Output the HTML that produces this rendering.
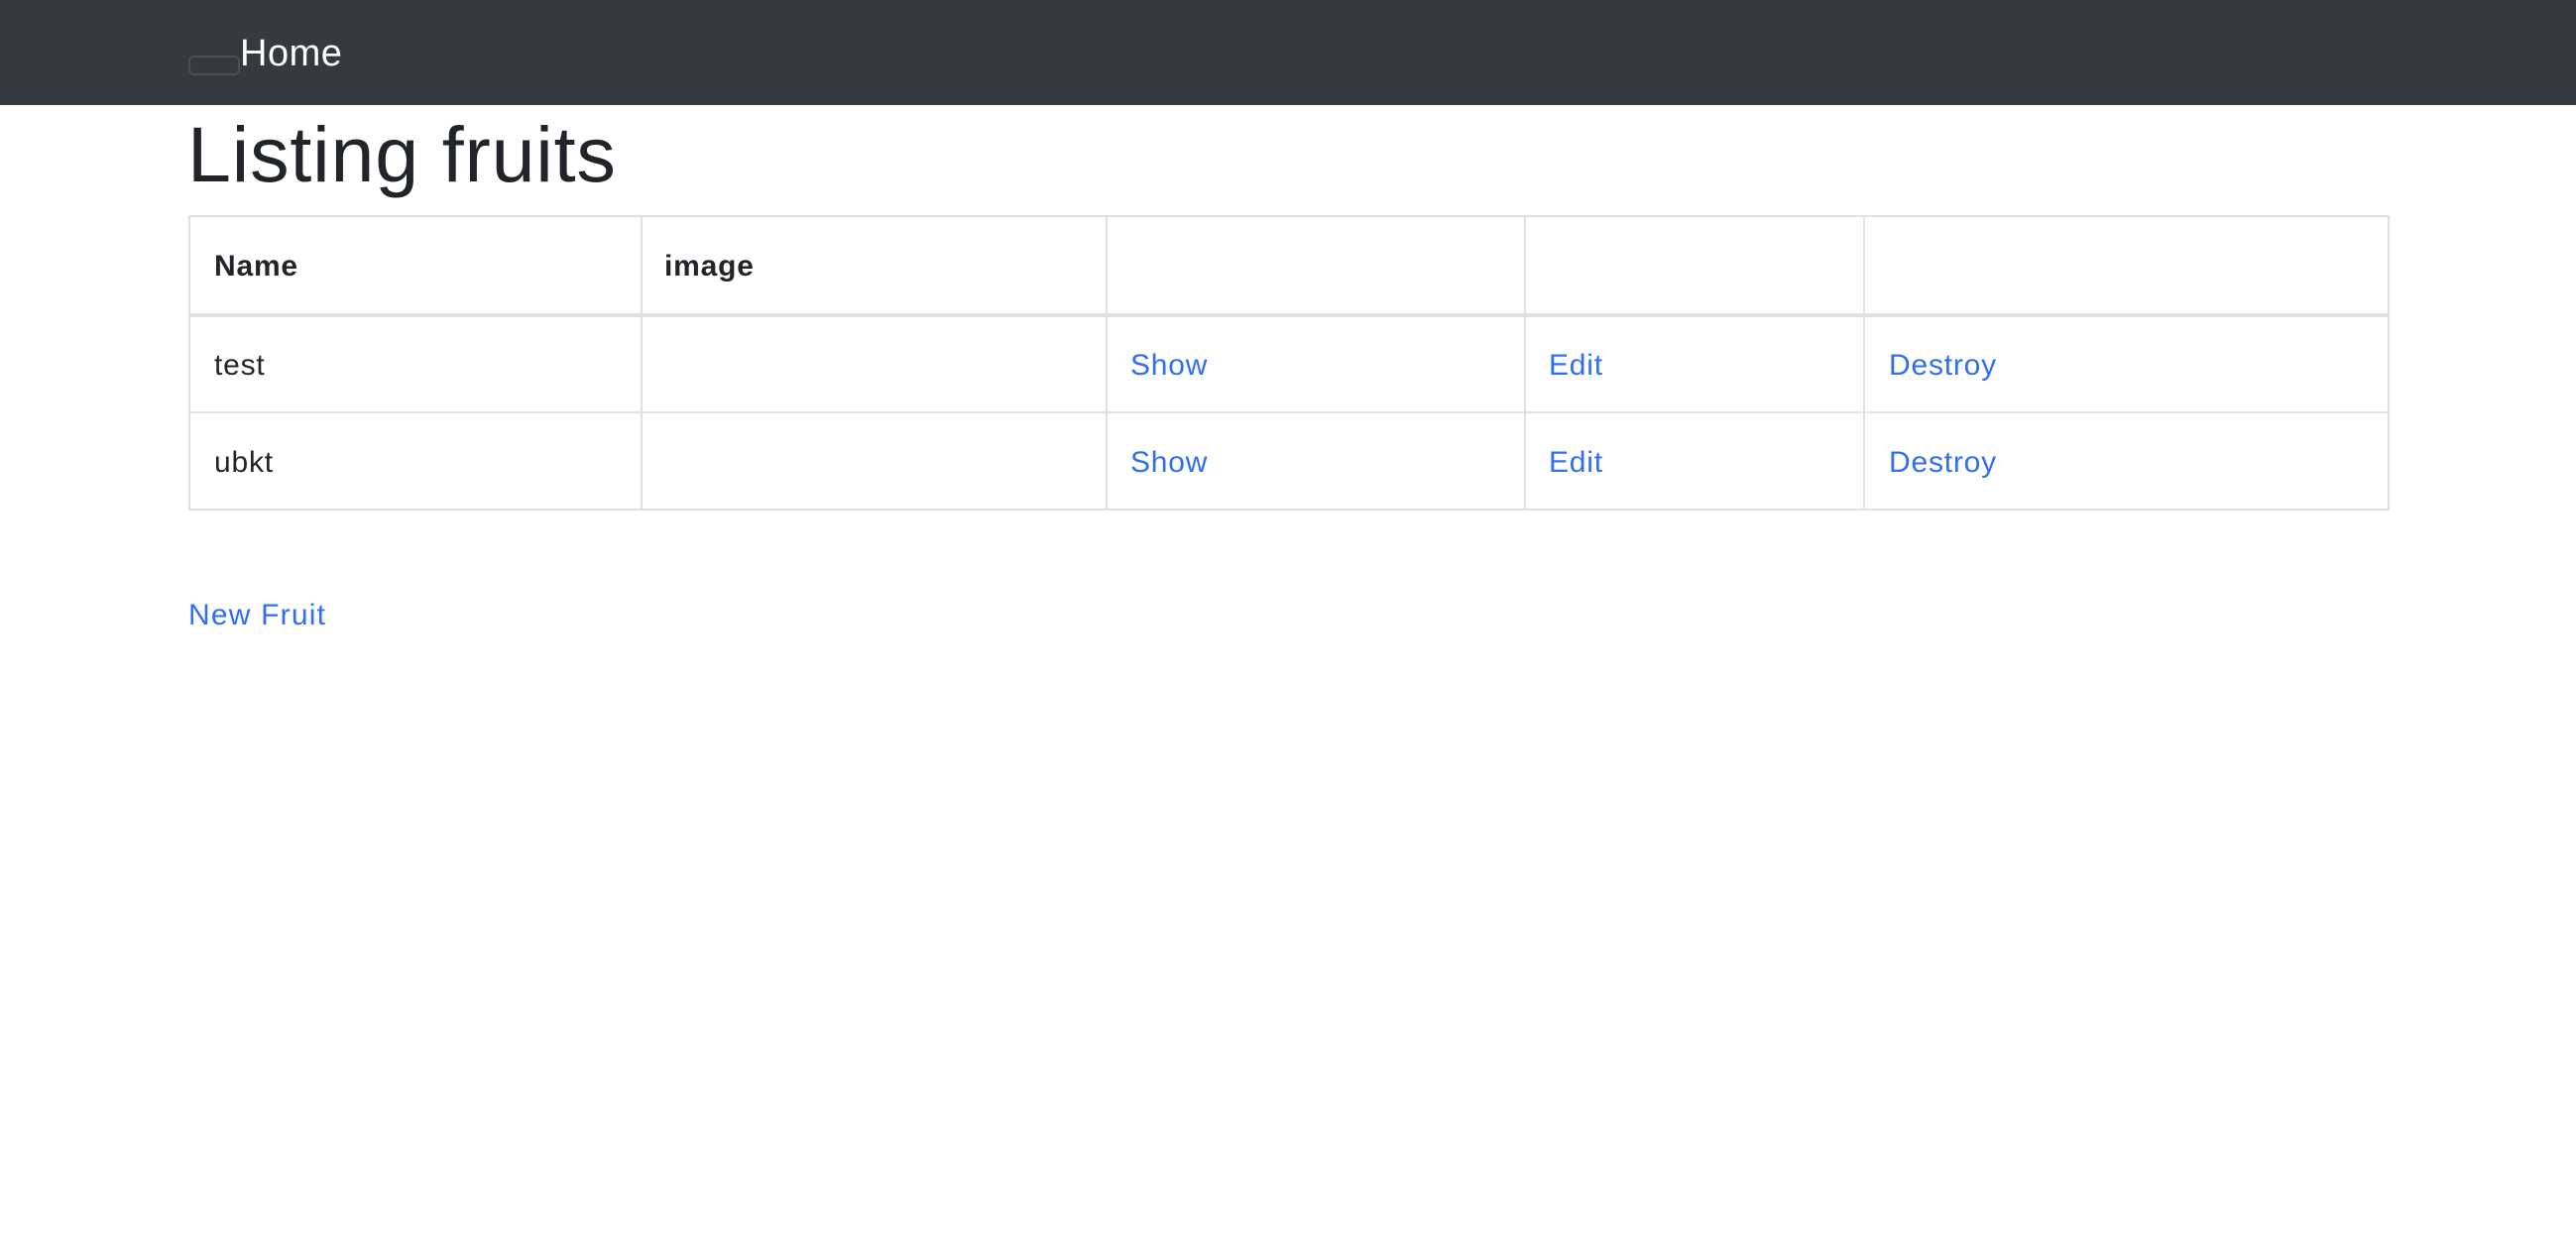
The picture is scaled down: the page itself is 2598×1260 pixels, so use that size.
<!DOCTYPE html>
<html><head><meta charset="utf-8"><style>
body{margin:0;width:2598px;height:1260px;background:#fff;font-family:"Liberation Sans",sans-serif;color:#212529;position:relative;overflow:hidden}
.nav{position:absolute;left:0;top:0;width:2598px;height:106px;background:#343a40}
.t{position:absolute;white-space:nowrap;line-height:1;letter-spacing:0.8px}
.h{position:absolute;background:#dee2e6}
a{color:#2f6ff0;text-decoration:none}
</style></head><body>
<div class="nav"></div>
<div style="position:absolute;left:190px;top:56px;width:48px;height:16px;border:2px solid #4a5056;border-radius:6px"></div>
<div class="t" style="left:242px;top:35px;font-size:38px;color:#fff;letter-spacing:0.5px">Home</div>
<div class="t" style="left:189px;top:116px;font-size:79px;letter-spacing:0.8px">Listing fruits</div>

<div class="h" style="left:190px;top:217px;width:2220px;height:2px"></div>
<div class="h" style="left:190px;top:316px;width:2220px;height:4px"></div>
<div class="h" style="left:190px;top:415px;width:2220px;height:2px"></div>
<div class="h" style="left:190px;top:513px;width:2220px;height:2px"></div>
<div class="h" style="left:190px;top:217px;width:2px;height:298px"></div>
<div class="h" style="left:646px;top:217px;width:2px;height:298px"></div>
<div class="h" style="left:1115px;top:217px;width:2px;height:298px"></div>
<div class="h" style="left:1537px;top:217px;width:2px;height:298px"></div>
<div class="h" style="left:1879px;top:217px;width:2px;height:298px"></div>
<div class="h" style="left:2408px;top:217px;width:2px;height:298px"></div>

<div class="t" style="left:216px;top:254px;font-size:30px;font-weight:bold">Name</div>
<div class="t" style="left:670px;top:254px;font-size:30px;font-weight:bold">image</div>

<div class="t" style="left:216px;top:354px;font-size:30px">test</div>
<div class="t" style="left:1140px;top:354px;font-size:30px"><a>Show</a></div>
<div class="t" style="left:1562px;top:354px;font-size:30px"><a>Edit</a></div>
<div class="t" style="left:1905px;top:354px;font-size:30px"><a>Destroy</a></div>

<div class="t" style="left:216px;top:452px;font-size:30px">ubkt</div>
<div class="t" style="left:1140px;top:452px;font-size:30px"><a>Show</a></div>
<div class="t" style="left:1562px;top:452px;font-size:30px"><a>Edit</a></div>
<div class="t" style="left:1905px;top:452px;font-size:30px"><a>Destroy</a></div>

<div class="t" style="left:190px;top:606px;font-size:30px;letter-spacing:1.2px"><a>New Fruit</a></div>
</body></html>
